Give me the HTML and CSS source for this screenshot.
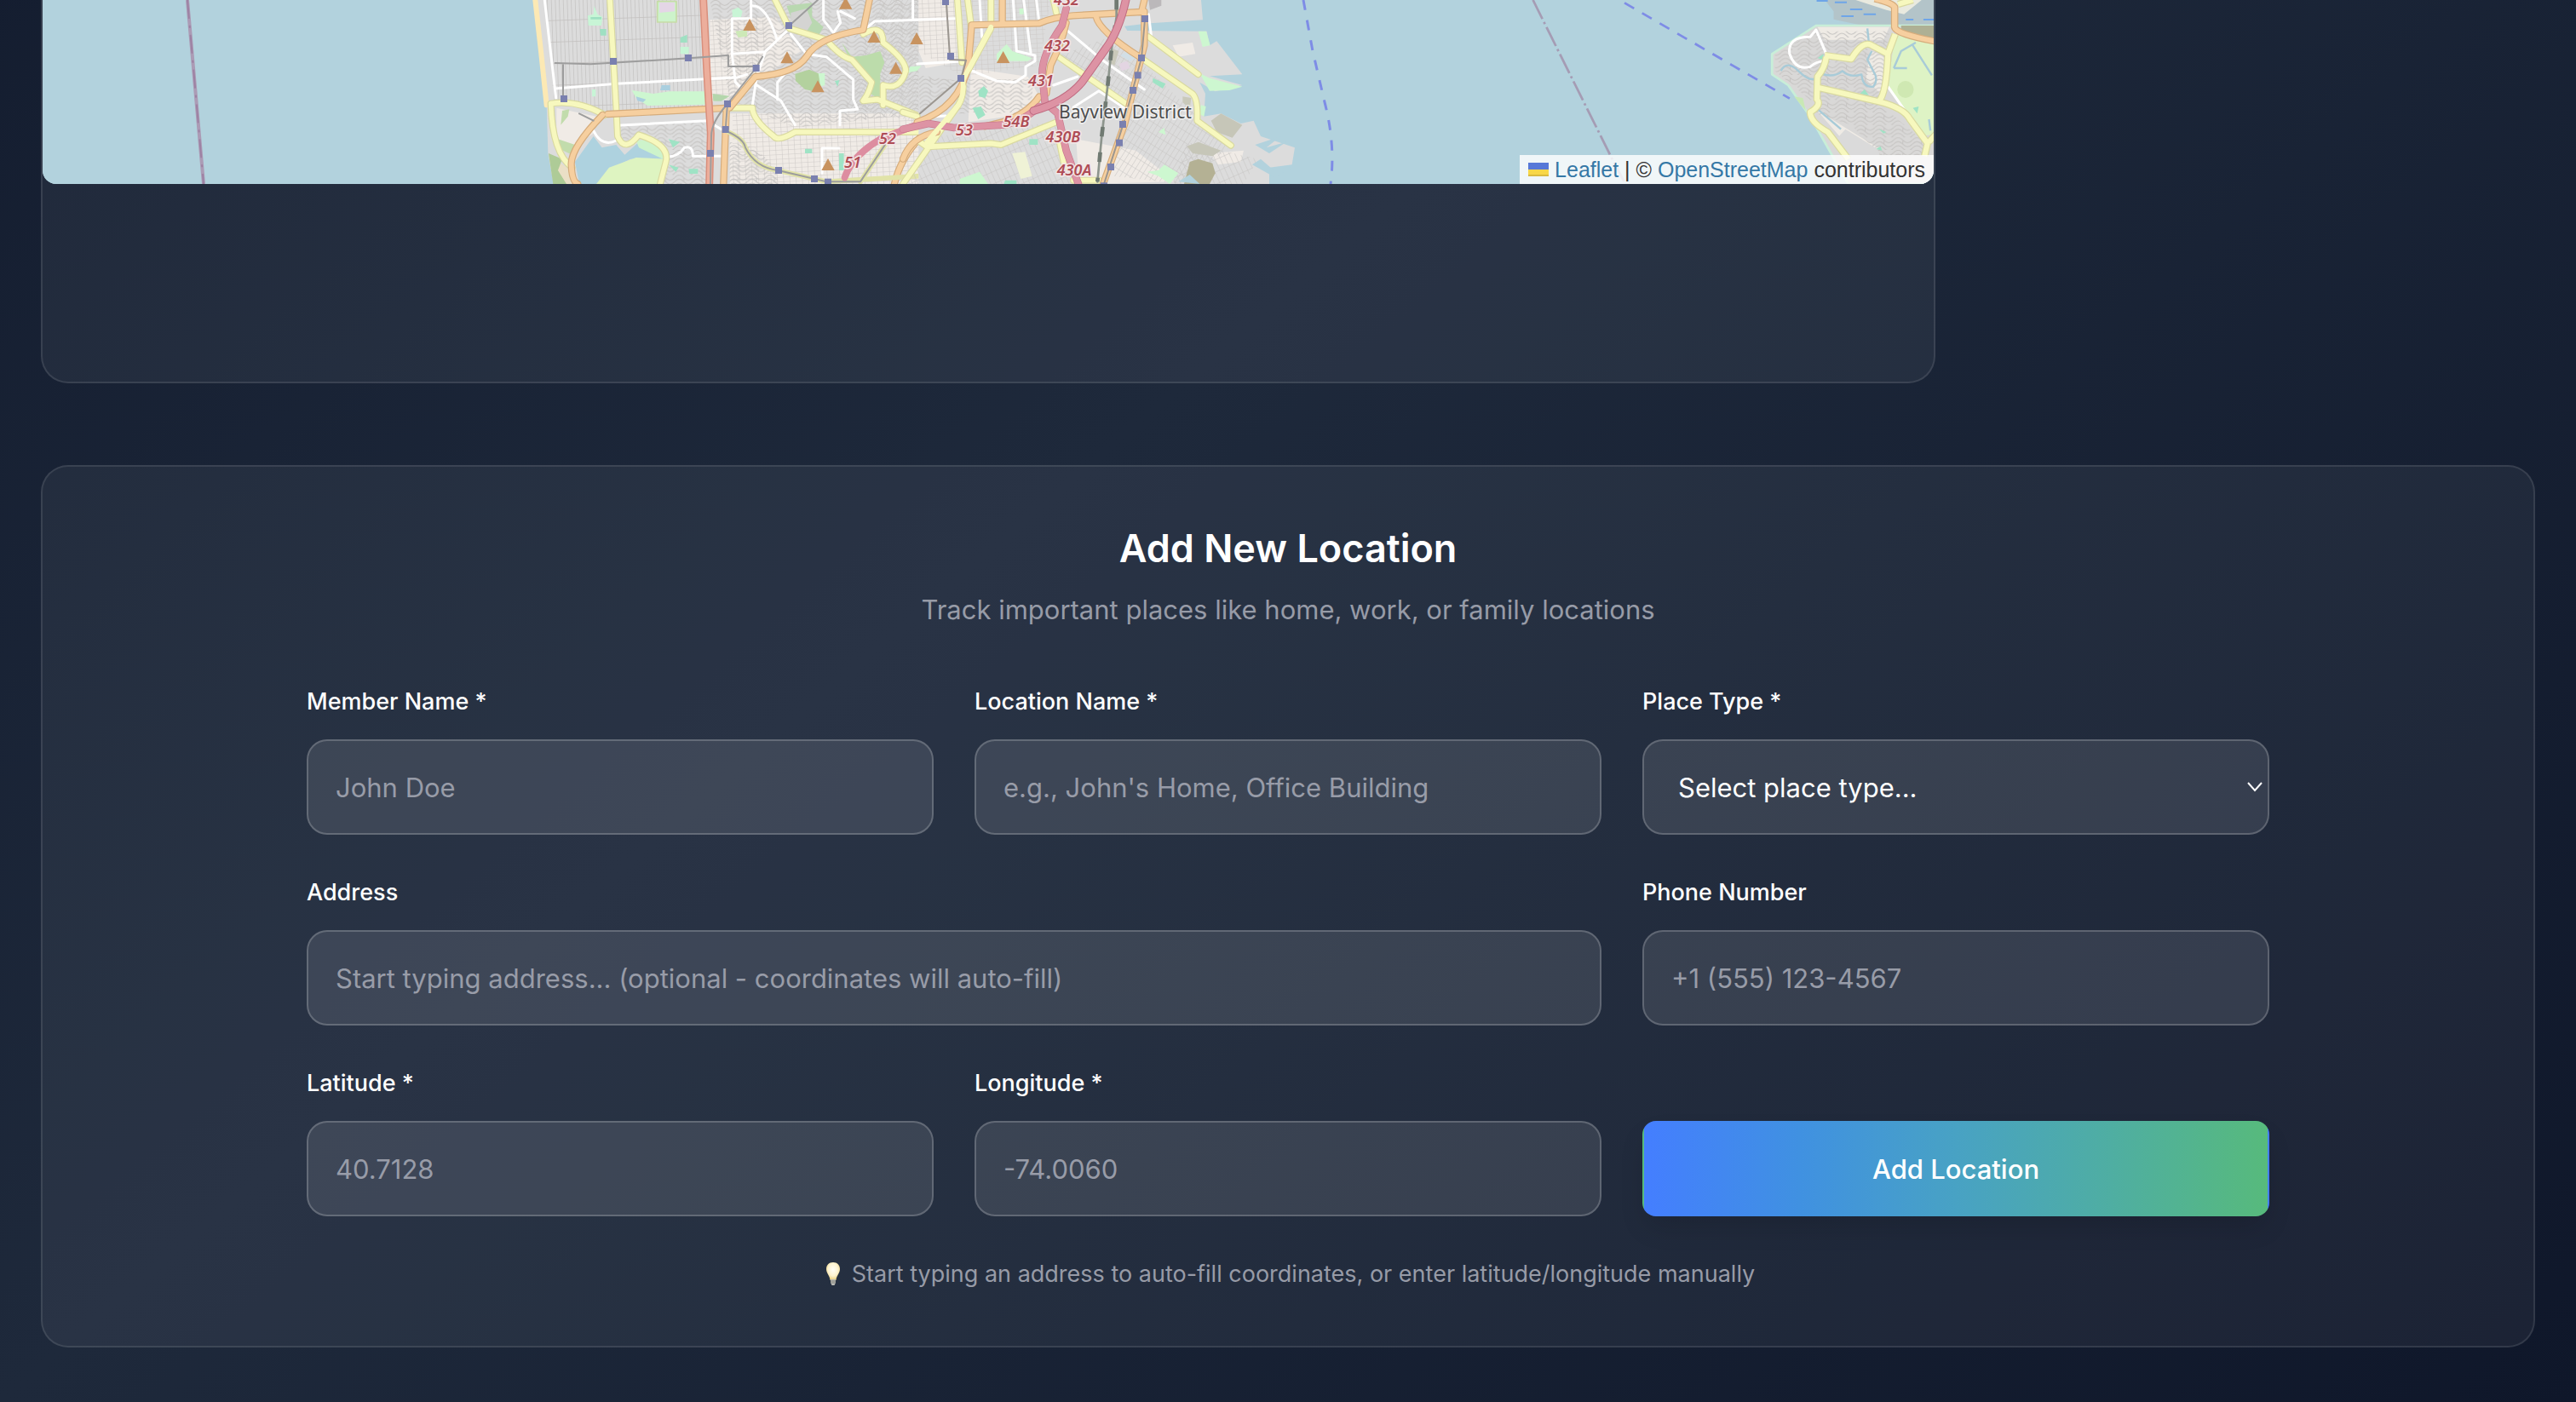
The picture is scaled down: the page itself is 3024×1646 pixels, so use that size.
FILE: index.html
```html
<!DOCTYPE html>
<html lang="en">
<head>
<meta charset="utf-8">
<meta name="viewport" content="width=device-width, initial-scale=1">
<title>Locations</title>
<link rel="stylesheet" href="styles.css">
</head>
<body>
<main class="page">
  <div class="overview">
    <section class="panel map-panel" aria-label="Map">
      <div class="map">
        <svg class="map-canvas" viewBox="50 0 2220 216" preserveAspectRatio="xMidYMax slice" role="img" aria-label="Street map of San Francisco">
          <defs>
            <pattern id="avenues" width="14" height="76" patternUnits="userSpaceOnUse" patternTransform="rotate(-2)"><path d="M0 0V76M0 0H14" stroke="#c2c0be" stroke-width="4" fill="none"/></pattern>
            <pattern id="blocks" width="22" height="16" patternUnits="userSpaceOnUse" patternTransform="rotate(-3)"><path d="M0 0H22M0 0V16" stroke="#cbc8c5" stroke-width="3" fill="none"/></pattern>
            <pattern id="slant" width="16" height="34" patternUnits="userSpaceOnUse" patternTransform="rotate(32)"><path d="M0 0H16M0 0V34" stroke="#c6c4c2" stroke-width="3" fill="none"/></pattern>
            <pattern id="slant2" width="18" height="40" patternUnits="userSpaceOnUse" patternTransform="rotate(-24)"><path d="M0 0H18M0 0V40" stroke="#c6c4c2" stroke-width="3" fill="none"/></pattern>
            <pattern id="hills" width="64" height="44" patternUnits="userSpaceOnUse"><path d="M0 10Q16 -8 32 10T64 10M0 24Q16 6 32 24T64 24M0 38Q16 20 32 38T64 38M32 10V24" stroke="#c6c4c2" stroke-width="3" fill="none"/></pattern>
            <path id="peak" d="M0 -22L23 20H-23Z" fill="#c8935f"/>
            <rect id="stop" x="-12" y="-12" width="24" height="24" fill="#7a80af"/>
          </defs>
          <rect x="0" width="2324" height="216" fill="#b2d2dd"/>
          <path d="M220 0L239 216" stroke="#ab9bb5" stroke-width="4" fill="none"/>
          <path d="M220 0L239 216" stroke="#9d81a3" stroke-width="2" stroke-dasharray="22 8 3 8" fill="none"/>

          <!-- western neighbourhoods -->
          <g transform="scale(.33333) translate(1800 0)" stroke-linejoin="round" stroke-linecap="round">
            <path d="M85 0L105 180L125 360L130 540L150 648H1440V0Z" fill="#dcdcdc"/>
            <path d="M700 70L930 60L1020 180L900 260L760 350L700 360ZM770 400H1440V648H770ZM160 380L300 410L290 470L210 520L160 510Z" fill="#f0ebe6"/>
            <path d="M120 0H670L690 380L350 400L150 350Z" fill="url(#avenues)"/>
            <path d="M700 0H1440V400L1000 450L860 390L770 350Z" fill="url(#hills)"/>
            <path d="M700 70H900V200L760 350H700ZM780 400H1440V648H780Z" fill="url(#blocks)"/>
            <path d="M390 440L690 420V648H540V540L460 480L380 500ZM770 500L860 520L940 600V648H770Z" fill="url(#hills)"/>
            <path d="M1180 380L1440 430V0H1300Z" fill="url(#slant)"/>
            <path d="M85 0L105 180L125 370" stroke="#fce9b4" stroke-width="18" fill="none"/>
            <path d="M118 0L158 345" stroke="#fff" stroke-width="9" fill="none"/>
            <path d="M132 545L210 600L240 648H150Z" fill="#eadfc6"/>
            <path d="M132 540L180 560L165 600L195 648H148Z" fill="#aecb97"/>
            <path d="M515 5H582V78H515Z" fill="#cdf3cb" stroke="#c6dba6" stroke-width="5"/>
            <path d="M522 8H576V40L522 45Z" fill="#e4d6e6"/>
            <path d="M270 55L290 50L292 20L304 50L322 60L318 90H272ZM778 35L800 26L815 40L810 60H780ZM596 165H626V190H596ZM285 315H298V340H285Z" fill="#c8f5d6"/>
            <path d="M596 132L620 122V150H596ZM312 102H335V125H315ZM280 60H318V68H280Z" fill="#9fe0c2"/>
            <path d="M790 110L830 105L832 128L800 132Z" fill="#cde9b7"/>
            <path d="M425 318L500 330L560 322H685V368L480 372L440 345Z" fill="#cdf7d0"/>
            <path d="M440 340L475 350L465 360L445 355ZM530 300H560V318H525Z" fill="#aacfdf"/>
            <path d="M710 330L770 338L740 356H712Z" fill="#b4d6ac"/>
            <path d="M1000 260L1050 245L1090 262L1085 325L1035 315L1002 285Z" fill="#b3d19e"/>
            <path d="M1082 258H1105V300L1090 305Z" fill="#cdf7d0"/>
            <path d="M1165 150L1200 200L1250 195L1300 180L1315 220L1300 260L1300 350L1265 330L1255 270L1200 225Z" fill="#bcdcab"/>
            <path d="M970 20L1060 10V60L1100 95L1080 130L1000 100Z" fill="#b9d8b0"/>
            <path d="M985 45L1040 30L1060 80L1040 112L985 100Z" fill="#d4d4d2"/>
            <path d="M290 480L320 520L370 510L400 545L450 500L540 560L420 560L340 600L320 648H240L225 570Z" fill="#aed2df"/>
            <path d="M440 495L500 490L535 530V560L450 520Z" fill="#cdf3cb"/>
            <path d="M345 590L440 555L545 560L520 648H300Z" fill="#def4c1"/>
            <path d="M165 490L225 510L215 545L160 520ZM180 390L205 385L200 410L175 440Z" fill="#c2dcac"/>
            <path d="M555 490L595 500L570 520ZM555 580L590 590L580 605ZM625 595H658V612H628ZM1035 524H1060V540H1035ZM1155 540H1172V600H1155ZM1140 285L1156 282L1150 305Z" fill="#9fe3c5"/>
            <g fill="none" stroke="#fff" stroke-width="9">
              <path d="M155 312L370 295L800 272L830 262M375 442L690 425L740 455M290 460Q320 520 370 495M555 552Q590 550 610 520Q640 510 640 550H742"/>
              <path d="M845 0V65H778V190L790 290L810 310M778 190L895 182M850 20Q900 20 935 135M970 110L895 182L865 270L850 370M985 120L1040 190L1110 200L1205 280V350L1220 385L1158 390V440M865 300L950 355L1000 440M960 265L938 290V350M1100 0V70L1135 115L1160 80L1150 40M1160 40L1210 65M1250 100L1280 75L1440 70M1095 610V522H1155"/>
            </g>
            <g fill="none" stroke="#d9d9a0" stroke-width="24"><path d="M348 0L370 380L375 480Q400 540 450 475Q560 510 545 570L525 648M140 365Q230 350 330 405M140 365Q145 540 215 590M770 380H850Q850 420 925 480Q940 500 1000 465H1440M930 0L980 100L1110 140Q1160 200 1200 210L1270 290Q1260 330 1240 355L1290 350L1440 410M1240 120Q1310 80 1310 150Q1390 210 1390 250Q1370 320 1310 300V370"/></g>
            <g fill="none" stroke="#f7f8be" stroke-width="17"><path d="M348 0L370 380L375 480Q400 540 450 475Q560 510 545 570L525 648M140 365Q230 350 330 405M140 365Q145 540 215 590M770 380H850Q850 420 925 480Q940 500 1000 465H1440M930 0L980 100L1110 140Q1160 200 1200 210L1270 290Q1260 330 1240 355L1290 350L1440 410M1240 120Q1310 80 1310 150Q1390 210 1390 250Q1370 320 1310 300V370"/></g>
            <path d="M340 402L770 380L860 270Q1000 260 1040 200Q1080 130 1240 105L1262 0M758 385L748 648M322 405Q210 520 212 580T235 648M1440 485Q1370 560 1350 648" fill="none" stroke="#d5ac7c" stroke-width="25"/>
            <path d="M340 402L770 380L860 270Q1000 260 1040 200Q1080 130 1240 105L1262 0M758 385L748 648M322 405Q210 520 212 580T235 648M1440 485Q1370 560 1350 648" fill="none" stroke="#f6cf9f" stroke-width="18"/>
            <path d="M677 0L690 260L703 470L698 648" fill="none" stroke="#d98f7c" stroke-width="27"/>
            <path d="M677 0L690 260L703 470L698 648" fill="none" stroke="#ecae9c" stroke-width="18"/>
            <path d="M765 465Q820 490 825 520Q860 590 940 600L1110 640L1440 620M1230 640L1330 490" fill="none" stroke="#e1e3a8" stroke-width="17"/>
            <path d="M155 222L280 226L625 205L765 195V234H862M183 225V345M885 200L862 240L762 366L755 456M762 366Q705 430 705 480L702 648M765 465Q820 490 825 520Q860 590 940 600L1110 640H1230L1330 490M980 90L1080 0M240 400L290 425" fill="none" stroke="#9d9d9d" stroke-width="6"/>
            <path d="M1175 625Q1200 550 1300 490L1440 435" fill="none" stroke="#dd8da0" stroke-width="24"/>
            <g><use href="#peak" x="840" y="88"/><use href="#peak" x="1178" y="12"/><use href="#peak" x="1278" y="130"/><use href="#peak" x="972" y="203"/><use href="#peak" x="1355" y="240"/><use href="#peak" x="1080" y="305"/><use href="#peak" x="1116" y="580"/></g>
            <g><use href="#stop" x="360" y="216"/><use href="#stop" x="624" y="204"/><use href="#stop" x="863" y="240"/><use href="#stop" x="978" y="90"/><use href="#stop" x="186" y="348"/><use href="#stop" x="762" y="366"/><use href="#stop" x="755" y="456"/><use href="#stop" x="702" y="540"/><use href="#stop" x="942" y="600"/><use href="#stop" x="1068" y="630"/><use href="#stop" x="1116" y="641"/></g>
          </g>

          <!-- eastern neighbourhoods and the docks -->
          <g transform="scale(.33333) translate(3180 0)" stroke-linejoin="round" stroke-linecap="round">
            <path d="M55 0H1050L1056 70L870 82L780 92L790 108L1070 110L1080 160L1105 145L1195 262L1080 268L1195 300L1100 322L1045 290L1065 330L1060 410L1120 400L1190 435L1235 425L1260 480L1380 520L1370 580L1290 590V648H55Z" fill="#dcdcdc"/>
            <path d="M55 0H190V220L80 240L55 180ZM240 240L440 270L480 340L440 400L230 430ZM610 490L820 530L960 640L620 648ZM950 160L1020 150L1030 190L970 200ZM1080 540L1200 530L1190 570L1110 580Z" fill="#f0ebe6"/>
            <path d="M55 0H520L480 230L210 270L55 180Z" fill="url(#blocks)"/>
            <path d="M55 265L200 285L60 400ZM230 280H460L450 400H180Z" fill="url(#hills)"/>
            <path d="M540 200L780 370L740 620L980 648L1150 520L840 220L730 130Z" fill="url(#slant)"/>
            <path d="M20 648L120 480L540 430L600 648ZM1000 500L1250 560L1200 648H950Z" fill="url(#slant2)"/>
            <path d="M330 190L365 155L385 180L455 205L440 215H330ZM1040 110H1068L1082 160L1055 165ZM1045 258L1080 275L1195 305L1150 318L1080 320ZM1050 370L1067 375L1060 410L1040 400ZM860 605L900 600L920 580L970 610L940 648L900 620ZM25 235L65 232L50 250L20 255ZM200 630L270 605L300 648H200ZM900 465L920 450L925 475ZM410 30H425V50H410ZM515 0H545V45Z" fill="#cdf7d0"/>
            <path d="M265 320L285 303L300 320L290 345L268 340ZM245 380L275 375L290 405L265 420ZM880 275L925 295L915 312L880 290ZM445 490H475V510H445ZM360 635H400V648H355Z" fill="#9fe3c5"/>
            <path d="M385 540L430 535L455 620L415 630Z" fill="#eff2d6"/>
            <path d="M1085 425L1120 400L1195 440L1160 485L1105 465ZM1000 515L1040 500L1120 530L1090 550L1020 540Z" fill="#c6c6b8"/>
            <path d="M1010 570L1040 560L1090 575L1100 610L1080 648H990Z" fill="#b4b194"/>
            <path d="M970 640L1010 615L1045 648ZM1230 580L1310 625L1370 590L1300 595L1260 560ZM1240 510L1330 480L1280 520L1350 500L1290 540Z" fill="#b2d2dd"/>
            <path d="M735 170L760 180L745 230L725 220ZM985 340L1015 345L1010 385L985 360Z" fill="#c9c9ba"/>
            <path d="M765 195L800 175L830 200L800 215Z" fill="#d2dfe6"/>
            <path d="M760 225L790 215L800 240L770 250Z" fill="#e3d5e2"/>
            <path d="M865 0H910V20L870 35Z" fill="#bbb8ba"/>
            <g fill="none" stroke="#fff" stroke-width="9"><path d="M35 0V70L190 65M270 0L278 130M388 0L400 180L465 195V215L432 235V265L395 290L330 285L240 248M425 0L450 185M470 0L478 65M570 100L700 210L850 315M530 300L615 270M600 378L690 320L780 380M865 50L875 130M90 412L150 408M50 225L215 215"/></g>
            <g fill="none" stroke="#d9d9a0" stroke-width="24"><path d="M192 0L208 220M228 0L240 90M310 0V100L212 280Q215 340 195 370L0 648M0 395L50 410M60 500L85 517L310 505L345 510L540 430M540 195L790 368M865 130L1040 262M840 205L1020 330Q1040 350 1036 425L1155 512M545 470L570 590M600 635H690M530 0L540 45"/></g>
            <g fill="none" stroke="#f7f8be" stroke-width="17"><path d="M192 0L208 220M228 0L240 90M310 0V100L212 280Q215 340 195 370L0 648M0 395L50 410M60 500L85 517L310 505L345 510L540 430M540 195L790 368M865 130L1040 262M840 205L1020 330Q1040 350 1036 425L1155 512M545 470L570 590M600 635H690M530 0L540 45"/></g>
            <path d="M350 0V75M230 230L242 88L480 82Q530 60 600 55L840 42L850 0M680 58Q690 110 840 205M850 40V160L780 440L705 648M575 80Q560 150 520 230L505 330M230 230Q200 380 50 430M480 340Q440 400 350 430L290 445M0 560Q30 480 120 465" fill="none" stroke="#d5ac7c" stroke-width="25"/>
            <path d="M350 0V75M230 230L242 88L480 82Q530 60 600 55L840 42L850 0M680 58Q690 110 840 205M850 40V160L780 440L705 648M575 80Q560 150 520 230L505 330M230 230Q200 380 50 430M480 340Q440 400 350 430L290 445M0 560Q30 480 120 465" fill="none" stroke="#f6cf9f" stroke-width="18"/>
            <path d="M152 0L165 198M165 210L222 212L205 275L60 400M852 70L840 205L775 440L708 648" fill="none" stroke="#9b9690" stroke-width="6"/>
            <path d="M752 0V60L735 170L720 310L700 480L685 640" fill="none" stroke="#8d958d" stroke-width="8"/>
            <path d="M752 0V60L735 170L720 310L700 480L685 640" fill="none" stroke="#707a72" stroke-width="14" stroke-dasharray="34 56" stroke-linecap="butt"/>
            <path d="M0 455L90 435L180 450L350 440Q420 430 480 375M575 30L560 90Q490 190 490 260L500 360L545 400L575 530L618 648" fill="none" stroke="#c9798d" stroke-width="26"/>
            <path d="M0 455L90 435L180 450L350 440Q420 430 480 375M575 30L560 90Q490 190 490 260L500 360L545 400L575 530L618 648" fill="none" stroke="#dd93a4" stroke-width="22"/>
            <path d="M785 0Q760 110 715 170L630 290Q570 360 460 390" fill="none" stroke="#c06b81" stroke-width="29"/>
            <path d="M785 0Q760 110 715 170L630 290Q570 360 460 390" fill="none" stroke="#dd93a4" stroke-width="23"/>
            <path d="M310 95L212 280Q215 340 195 370L85 500" fill="none" stroke="#f7f8be" stroke-width="17"/>
            <use href="#peak" x="48" y="136"/><use href="#peak" x="353" y="202"/>
            <g><use href="#stop" x="150" y="6"/><use href="#stop" x="168" y="198"/><use href="#stop" x="204" y="276"/><use href="#stop" x="852" y="66"/><use href="#stop" x="840" y="204"/><use href="#stop" x="827" y="265"/><use href="#stop" x="810" y="318"/><use href="#stop" x="774" y="438"/><use href="#stop" x="762" y="503"/><use href="#stop" x="732" y="588"/><use href="#stop" x="708" y="655"/></g>
          </g>
          <path d="M1530 0L1541 60L1555 120Q1568 170 1562 216" fill="none" stroke="#7e8ce6" stroke-width="3" stroke-dasharray="12 12"/>

          <!-- across the bay -->
          <g transform="scale(.34435 .33333) translate(5111 0)" stroke-linejoin="round">
            <path d="M115 0L385 560L430 648" stroke="#a59cb4" stroke-width="8" fill="none" stroke-dasharray="74 12 8 12"/>
            <path d="M427 10L990 347" stroke="#7e8ce6" stroke-width="8" fill="none" stroke-dasharray="38 32"/>
            <path d="M1110 0H1500V90H1240L1140 68V40Z" fill="#b3c4c9"/>
            <path d="M1215 0H1440L1380 50L1320 35Z" fill="#e9eadf"/>
            <path d="M1082 3H1120M1144 8H1185M1196 33H1238M1242 50H1284M1166 57H1208M1386 69H1412M1446 69H1490" stroke="#6ea5e8" stroke-width="6"/>
            <path d="M1080 90H1500V648H1190L1060 410L985 300L930 262V190Z" fill="#d9d8d7" stroke="#c8eed8" stroke-width="8"/>
            <path d="M1085 95H1330L1310 140H1110ZM1265 180L1325 200L1300 330L1250 280ZM1080 385L1180 450L1290 520L1260 560L1160 480Z" fill="#efebe5"/>
            <path d="M1100 110H1330L1300 350L1090 310V200L1050 150ZM940 190L1080 110L1110 220L1080 370L940 250ZM1080 320L1290 360L1450 500V548H1300L1200 440L1080 400Z" fill="url(#hills)"/>
            <path d="M1350 120L1500 150V470L1440 480L1380 380L1325 300Z" fill="#def3c5"/>
            <path d="M1370 90H1500V145L1370 120Z" fill="#aeb094"/>
            <ellipse cx="1385" cy="315" rx="28" ry="30" fill="#cfe8b2"/>
            <path d="M1150 490L1180 455L1290 525L1300 560H1200Z" fill="#dadada"/>
            <path d="M1005 340L1035 345L1045 390Z" fill="#c8e8b5"/>
            <path d="M1085 205L1105 190V210ZM1230 330L1245 315L1260 335ZM1410 380L1430 375L1425 400ZM1285 525L1300 515L1305 530ZM1295 455L1320 465L1310 470Z" fill="#9fe3c5"/>
            <path d="M960 250Q980 210 1020 250T1080 275M1100 260Q1140 275 1170 250Q1195 275 1235 262Q1240 310 1275 305Q1295 280 1275 250L1255 210L1270 180M1080 380L1165 455M1255 100L1260 150M1345 240L1370 180L1420 150M1410 160L1475 265M1345 240H1390M1465 420L1470 460" fill="none" stroke="#a8cbd8" stroke-width="7"/>
            <path d="M1115 190L1080 105L1060 130Q980 130 990 190Q1010 250 1060 235Q1090 210 1115 218M1325 305L1390 400" fill="none" stroke="#fff" stroke-width="9"/>
            <g fill="none" stroke="#d9d9a0" stroke-width="25"><path d="M1350 120L1325 190Q1320 330 1295 355M1110 195L1200 208Q1240 140 1270 160L1325 190M1115 200Q1110 240 1085 270L1083 350Q1100 370 1060 395Q1060 430 1120 465L1190 560M1085 308L1295 358Q1380 380 1400 420L1460 505L1450 550M1500 460L1465 500M1360 15L1410 0"/></g>
            <g fill="none" stroke="#f7f8be" stroke-width="18"><path d="M1350 120L1325 190Q1320 330 1295 355M1110 195L1200 208Q1240 140 1270 160L1325 190M1115 200Q1110 240 1085 270L1083 350Q1100 370 1060 395Q1060 430 1120 465L1190 560M1085 308L1295 358Q1380 380 1400 420L1460 505L1450 550M1500 460L1465 500M1360 15L1410 0"/></g>
            <path d="M1280 -5Q1340 10 1348 25V95Q1350 120 1500 148" fill="none" stroke="#d5ac7c" stroke-width="25"/>
            <path d="M1280 -5Q1340 10 1348 25V95Q1350 120 1500 148" fill="none" stroke="#f6cf9f" stroke-width="18"/>
          </g>

          <g class="exit-labels">
            <text x="1252" y="6">432</text>
            <text x="1241" y="60">432</text>
            <text x="1222" y="101">431</text>
            <text x="1193" y="149">54B</text>
            <text x="1132" y="159">53</text>
            <text x="1042" y="169">52</text>
            <text x="1001" y="197">51</text>
            <text x="1248" y="167">430B</text>
            <text x="1261" y="206">430A</text>
          </g>
          <text class="district-label" x="1321" y="139">Bayview District</text>
        </svg>
        <div class="attribution">
          <svg class="flag" viewBox="0 0 12 8" aria-hidden="true"><path fill="#5678d8" d="M0 0h12v4H0z"/><path fill="#f8d748" d="M0 4h12v3H0z"/><path fill="#d9ba40" d="M0 7h12v1H0z"/></svg>
          <span><a href="#leaflet">Leaflet</a> | © <a href="#osm">OpenStreetMap</a> contributors</span>
        </div>
      </div>
    </section>
  </div>

  <section class="panel form-panel">
    <header class="form-header">
      <h2>Add New Location</h2>
      <p>Track important places like home, work, or family locations</p>
    </header>
    <form class="location-form">
      <div class="field">
        <label for="member">Member Name *</label>
        <input id="member" type="text" placeholder="John Doe">
      </div>
      <div class="field">
        <label for="location">Location Name *</label>
        <input id="location" type="text" placeholder="e.g., John's Home, Office Building">
      </div>
      <div class="field">
        <label for="type">Place Type *</label>
        <div class="select-wrap">
          <select id="type"><option>Select place type...</option><option>Home</option><option>Work</option><option>Family</option></select>
          <svg class="chevron" viewBox="0 0 18 12" aria-hidden="true"><path d="M1 1l8 9 8-9" fill="none" stroke="#fff" stroke-width="2"/></svg>
        </div>
      </div>
      <div class="field field-wide">
        <label for="address">Address</label>
        <input id="address" type="text" placeholder="Start typing address... (optional - coordinates will auto-fill)">
      </div>
      <div class="field">
        <label for="phone">Phone Number</label>
        <input id="phone" type="tel" placeholder="+1 (555) 123-4567">
      </div>
      <div class="field">
        <label for="lat">Latitude *</label>
        <input id="lat" type="text" inputmode="decimal" placeholder="40.7128">
      </div>
      <div class="field">
        <label for="lng">Longitude *</label>
        <input id="lng" type="text" inputmode="decimal" placeholder="-74.0060">
      </div>
      <div class="field field-action">
        <button type="submit">Add Location</button>
      </div>
    </form>
    <p class="hint">
      <svg class="bulb" viewBox="0 0 28 28" aria-hidden="true">
        <defs><radialGradient id="glow" cx=".5" cy=".4" r=".6"><stop offset="0" stop-color="#fffef6"/><stop offset=".6" stop-color="#fdf3cf"/><stop offset="1" stop-color="#e8cd78"/></radialGradient></defs>
        <path d="M14 0C9 0 6 3.500 6 8c0 5 4 7.500 4.500 13h7C18 15.500 22 13 22 8c0-4.500-3-8-8-8z" fill="url(#glow)"/>
        <path d="M11 20h6v4l-1.500 3h-3L11 24z" fill="#b9b9b4"/><path d="M11 22h6M11 24h6" stroke="#77776f" stroke-width=".8"/>
      </svg>
      <span>Start typing an address to auto-fill coordinates, or enter latitude/longitude manually</span>
    </p>
  </section>
</main>
</body>
</html>
```
FILE: styles.css
```css
*,
*::before,
*::after {
  box-sizing: border-box;
}

body {
  margin: 0;
  min-height: 100vh;
  font-family: Inter, "Liberation Sans", sans-serif;
  color: #fff;
  background: #0f172a linear-gradient(to bottom right, #0f172a, #1e293b, #0f172a) bottom / 100% 2600px no-repeat;
}

h2,
p {
  margin: 0;
}

.page {
  display: flex;
  flex-direction: column;
  gap: 96px;
  padding: 0 48px 64px;
}

.overview {
  display: grid;
  grid-template-columns: minmax(0, 1fr) 640px;
  gap: 64px;
}

.panel {
  background: rgba(255, 255, 255, 0.05);
  border: 2px solid rgba(255, 255, 255, 0.1);
  border-radius: 32px;
}

.map-panel {
  border-top: 0;
  border-top-left-radius: 0;
  border-top-right-radius: 0;
  padding-bottom: 232px;
}

.map {
  position: relative;
  overflow: hidden;
  border-radius: 0 0 16px 16px;
  background: #b2d2dd;
}

.map-canvas {
  display: block;
  width: 100%;
  height: 216px;
}

.exit-labels {
  font: italic 600 18px "Noto Sans", sans-serif;
  text-anchor: middle;
  fill: #ae4c55;
  stroke: #f3e6e6;
  stroke-width: 3px;
  paint-order: stroke;
}

.district-label {
  font: 400 21px "Noto Sans", sans-serif;
  text-anchor: middle;
  fill: #4d4d4d;
  stroke: rgba(255, 255, 255, 0.6);
  stroke-width: 3px;
  paint-order: stroke;
}

.attribution {
  position: absolute;
  right: 0;
  bottom: 0;
  display: flex;
  align-items: center;
  gap: 7px;
  padding: 0 10px;
  background: rgba(255, 255, 255, 0.8);
  color: #333;
  font: 25px/34px "Liberation Sans", Arial, sans-serif;
}

.attribution a {
  color: #3578a6;
  text-decoration: none;
}

.flag {
  width: 24px;
  height: 16px;
}

.form-panel {
  padding: 64px;
}

.form-header {
  text-align: center;
  margin-bottom: 64px;
}

.form-header h2 {
  font-size: 45px;
  font-weight: 600;
  line-height: 64px;
}

.form-header p {
  margin-top: 16px;
  font-size: 31px;
  line-height: 48px;
  color: #979ba7;
}

.location-form {
  display: grid;
  grid-template-columns: repeat(3, minmax(0, 1fr));
  gap: 48px;
  max-width: 2304px;
  margin: 0 auto;
}

.field {
  display: flex;
  flex-direction: column;
  gap: 24px;
}

.field-wide {
  grid-column: span 2;
}

.field-action {
  justify-content: flex-end;
}

label {
  font-size: 27px;
  font-weight: 500;
  line-height: 40px;
}

input,
select,
button {
  width: 100%;
  height: 112px;
  margin: 0;
  font-family: inherit;
  font-size: 31px;
  color: #fff;
}

input,
select {
  padding: 0 32px;
  border: 2px solid rgba(255, 255, 255, 0.2);
  border-radius: 24px;
  background: rgba(255, 255, 255, 0.1);
  outline: none;
}

input::placeholder {
  color: #989ca8;
  opacity: 1;
}

.select-wrap {
  position: relative;
}

select {
  display: block;
  appearance: none;
  padding: 0 40px;
}

option {
  color: #0f172a;
}

.chevron {
  position: absolute;
  right: 8px;
  top: 50%;
  width: 18px;
  height: 12px;
  transform: translateY(-50%);
  pointer-events: none;
}

button {
  border: 2px solid transparent;
  border-radius: 16px;
  background: linear-gradient(to right, #447eff, #4091e1 25%, #48a2c4 50%, #4faea2 75%, #57ba7c);
  box-shadow: 0 16px 32px -4px rgba(0, 0, 0, 0.12);
  font-weight: 500;
}

.hint {
  display: flex;
  justify-content: center;
  align-items: center;
  gap: 8px;
  margin-top: 48px;
  font-size: 27px;
  line-height: 40px;
  color: #979ba7;
}

.bulb {
  flex: none;
  width: 28px;
  height: 28px;
}
```
